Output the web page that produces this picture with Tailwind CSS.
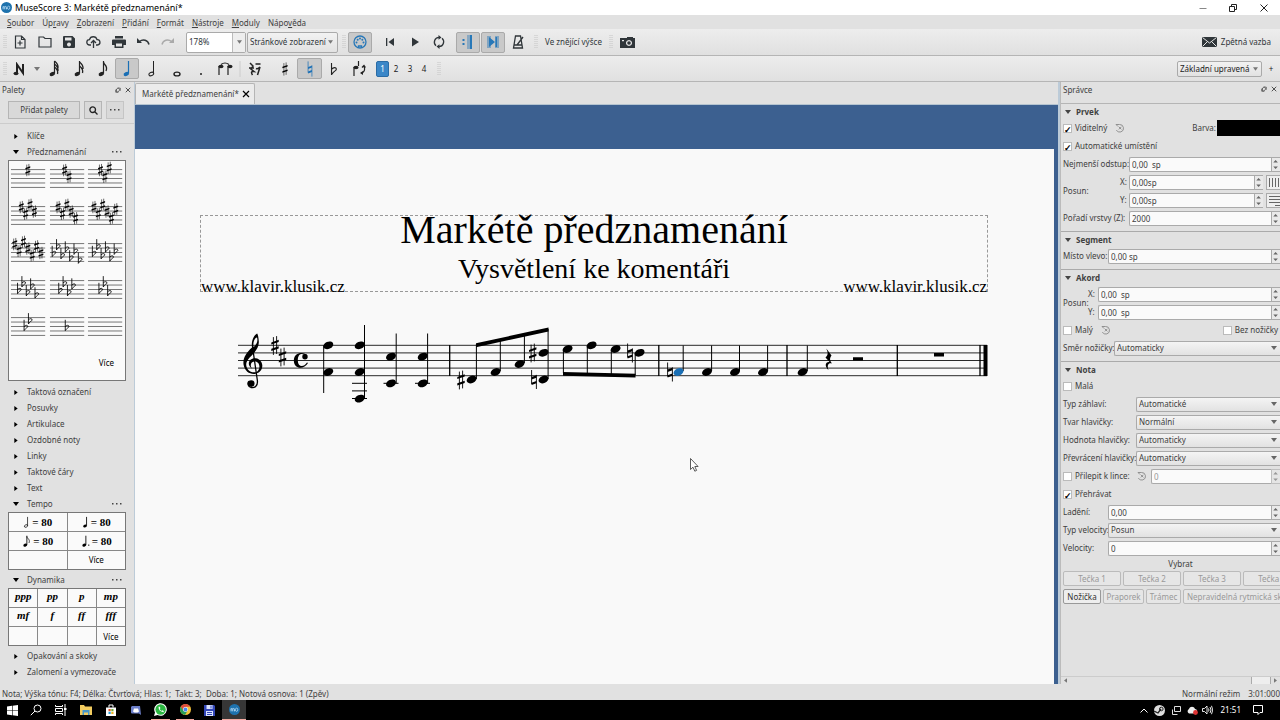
<!DOCTYPE html>
<html lang="cs">
<head>
<meta charset="utf-8">
<title>MuseScore 3: Markétě předznamenání*</title>
<script src="https://cdn.jsdelivr.net/npm/@tailwindcss/browser@4"></script>
</head>
<body class="font-['Noto_Sans','Open_Sans',sans-serif] text-[8px] leading-[12px] text-[#404040] bg-[#e1e1e1] overflow-hidden">

<svg class="hidden" aria-hidden="true">
  <symbol id="head" viewBox="-6 -5 12 10" overflow="visible"><ellipse rx="5.2" ry="3.6" transform="rotate(-24)"/></symbol>
  <symbol id="sharp" viewBox="-4 -10 8 20" overflow="visible"><path d="M-1.6-8.4V9.4M1.6-9.4V8.4" stroke="currentColor" stroke-width=".9" fill="none"/><path d="M-3.7-2.1 3.7-4.7V-2.5L-3.7.1ZM-3.7 4.3 3.7 1.7V3.9L-3.7 6.5Z" transform="translate(0 -1)"/></symbol>
  <symbol id="natural" viewBox="-4 -10 8 20" overflow="visible"><path d="M-2.4-9.5V4.6M2.4-4.6V9.5" stroke="currentColor" stroke-width=".9" fill="none"/><path d="M-2.4-2.4 2.4-4.2V-1.8L-2.4 0ZM-2.4 3.2 2.4 1.4V3.8L-2.4 5.6Z"/></symbol>
  <symbol id="flat" viewBox="-3 -10 6 14" overflow="visible"><path d="M-2.4-12V4.6C1-.8 3.2.2 3.2-1.6 3.2-4.4-.4-4-2.4-1.6" fill="none" stroke="currentColor" stroke-width="1.3"/></symbol>
  <symbol id="spin" viewBox="0 0 9 14" preserveAspectRatio="none"><path d="M0 0h9v14H0z" fill="#e9e9e9"/><path d="M.5 0v14M0 .5h9M0 13.500h9" stroke="#aaa" fill="none"/><path d="M2.3 5.2h4.6L4.6 2.7zM2.3 8.8h4.6L4.6 11.3z" fill="#666"/></symbol>
  <symbol id="down" viewBox="0 0 6 4"><path d="M0 0h6L3 4z"/></symbol>
  <symbol id="right" viewBox="0 0 4 6"><path d="M0 0v6l4-3z"/></symbol>
  <symbol id="x" viewBox="0 0 8 8"><path d="M1 1l6 6M7 1l-6 6" stroke="currentColor" stroke-width="1.2" fill="none"/></symbol>
  <symbol id="float" viewBox="0 0 8 8"><path d="M3.5 1.5H7V5M1 3.500V7h3.500M2 6.500C1 2.500 3 1.500 5 1.500M6 3c0 2-1 3.500-3 3.500" stroke="currentColor" fill="none"/></symbol>
  <symbol id="reset" viewBox="0 0 10 10"><path d="M1 1.500h3.500a3.800 3.800 0 1 1-3.200 5.500M1 1.500 3 3.500M3.800 3.800l2.600 2.600M6.400 3.800 3.800 6.400" stroke="#888" stroke-width=".9" fill="none"/></symbol>
  <symbol id="ms" viewBox="0 0 12 12"><circle cx="6" cy="6" r="6" fill="#1e72ad"/><path d="M2.300 8V4.800M2.300 5.800c.3-1.200 1.800-1.200 1.800.2V8M4.100 5.800c.4-1.200 1.900-1.200 1.900.2V8" stroke="#b9dcf5" fill="none"/><ellipse cx="8.300" cy="6.300" rx="1.300" ry="1.800" fill="none" stroke="#b9dcf5" stroke-width=".8"/></symbol>
  <symbol id="grip" viewBox="0 0 4 14"><path d="M1 0v14M3 0v14" stroke="#c4c4c4" stroke-dasharray="1 1" fill="none"/></symbol>
  <symbol id="qn" viewBox="0 0 10 18"><path d="M6.500 1v12.500" stroke="currentColor" stroke-width="1.200"/><ellipse cx="4.300" cy="14" rx="2.800" ry="2" transform="rotate(-24 4.300 14)"/></symbol>
</svg>

<div class="flex h-screen flex-col">
  <!-- Title bar -->
  <header class="flex h-[15px] shrink-0 items-center bg-white pl-[1px] text-black">
    <svg class="size-[11px]"><use href="#ms"/></svg>
    <h1 class="ml-[3px] flex-1 text-[9px]">MuseScore 3: Markétě předznamenání*</h1>
    <button aria-label="Minimalizovat" class="flex w-[30px] justify-center"><svg class="size-[8px]" viewBox="0 0 8 8"><path d="M0.500 4.500h7" stroke="#888"/></svg></button>
    <button aria-label="Obnovit" class="flex w-[30px] justify-center"><svg class="size-[8px]" viewBox="0 0 8 8" fill="none" stroke="#222"><path d="M.5 2.500h5v5h-5zM2.500 2.500v-2h5v5h-2"/></svg></button>
    <button aria-label="Zavřít" class="flex w-[32px] justify-center"><svg class="size-[8px]" viewBox="0 0 8 8" stroke="#222"><path d="M.5.5l7 7M7.500.5l-7 7"/></svg></button>
  </header>

  <nav class="flex h-[14px] shrink-0 items-center gap-[8px] pl-[7px] pt-[1px]">
    <button><u>S</u>oubor</button><button>Úp<u>r</u>avy</button><button><u>Z</u>obrazení</button><button><u>P</u>řidání</button><button><u>F</u>ormát</button><button><u>N</u>ástroje</button><button><u>M</u>oduly</button><button>Nápo<u>v</u>ěda</button>
  </nav>

  <!-- File and playback toolbar -->
  <div class="flex h-[27px] shrink-0 items-center border-b border-[#b5b5b5] bg-linear-to-b from-[#ededed] to-[#e0e0e0] pl-[3px] text-[#30363a]">
    <svg class="h-[14px] w-[4px]"><use href="#grip"/></svg>
    <button aria-label="Nový" class="flex w-[25px] justify-center"><svg class="size-[14px]" viewBox="0 0 14 14" fill="none" stroke="currentColor" stroke-width="1.200"><path d="M2.500 1h6l3.500 3.500V13h-9.500zM8.500 1v3.500H12M7 5.500v5M4.500 8h5"/></svg></button>
    <button aria-label="Otevřít" class="flex w-[25px] justify-center"><svg class="size-[14px]" viewBox="0 0 14 14" fill="none" stroke="currentColor" stroke-width="1.200"><path d="M1 2h4.500L7 3.500h6V12H1z"/></svg></button>
    <button aria-label="Uložit" class="flex w-[24px] justify-center"><svg class="size-[14px]" viewBox="0 0 14 14"><path fill="currentColor" fill-rule="evenodd" d="M2 1h8.500L13 3.500V12q0 1-1 1H2q-1 0-1-1V2q0-1 1-1zM3 2.500v3h6.500v-3zM7 7.500a2 2 0 1 0 .01 0z"/></svg></button>
    <button aria-label="Uložit online" class="flex w-[25px] justify-center"><svg class="h-[14px] w-[15px]" viewBox="0 0 15 14" fill="none" stroke="currentColor" stroke-width="1.300"><path d="M5 10H3.500a2.700 2.700 0 0 1 0-5.400C4.500.8 10 .8 11 4.600a2.700 2.700 0 0 1 .5 5.400H10M7.500 13V6M5 8l2.500-2.500L10 8"/></svg></button>
    <button aria-label="Tisk" class="flex w-[25px] justify-center"><svg class="size-[14px]" viewBox="0 0 14 14"><path fill="currentColor" fill-rule="evenodd" d="M3 1h8v2.500H3zM1 4.500h12q1 0 1 1V10h-2.500v3h-9v-3H0V5.500q0-1 1-1zM4 8.500v3h6v-3z"/></svg></button>
    <button aria-label="Zpět" class="flex w-[24px] justify-center"><svg class="size-[14px]" viewBox="0 0 14 14"><path d="M1 3v5h5z" fill="currentColor"/><path d="M3.500 6.500C7 3.500 12 5 13 9.500" fill="none" stroke="currentColor" stroke-width="1.500"/></svg></button>
    <button aria-label="Znovu" class="flex w-[25px] justify-center text-[#aaa]"><svg class="size-[14px]" viewBox="0 0 14 14"><path d="M13 3v5H8z" fill="currentColor"/><path d="M10.500 6.500C7 3.500 2 5 1 9.500" fill="none" stroke="currentColor" stroke-width="1.500"/></svg></button>
    <div class="ml-[6px] flex h-[21px] w-[60px] items-center rounded-[2px] border border-[#aaa] bg-white">
      <input aria-label="Lupa" value="178%" class="min-w-0 flex-1 pl-[2px]">
      <button aria-label="Lupa – nabídka" class="flex h-full w-[13px] items-center justify-center border-l border-[#bbb] bg-[#eee] text-[#777]"><svg class="h-[4px] w-[5px]" fill="currentColor"><use href="#down"/></svg></button>
    </div>
    <div class="relative ml-[1px] w-[91px]">
      <select aria-label="Zobrazení" class="h-[21px] w-full appearance-none rounded-[2px] border border-[#aaa] bg-linear-to-b from-[#f2f2f2] to-[#e2e2e2] pl-[2px]"><option>Stránkové zobrazení</option></select>
      <svg class="pointer-events-none absolute right-[5px] top-[8px] h-[4px] w-[5px]" fill="#777"><use href="#down"/></svg>
    </div>
    <svg class="ml-[4px] mr-[2px] h-[14px] w-[4px]"><use href="#grip"/></svg>
    <button aria-label="MIDI vstup" class="flex h-[21px] w-[24px] items-center justify-center rounded-[2px] border border-[#aaa] bg-[#c9c9c9]"><svg class="size-[14px]" viewBox="0 0 14 14" fill="none" stroke="#2878b8" stroke-width="1.300"><circle cx="7" cy="7" r="6"/><path d="M5.500 13v-2h3v2"/><g fill="#2878b8" stroke="none"><circle cx="3.500" cy="7.500" r="1"/><circle cx="4.700" cy="4.700" r="1"/><circle cx="7" cy="3.600" r="1"/><circle cx="9.300" cy="4.700" r="1"/><circle cx="10.500" cy="7.500" r="1"/></g></svg></button>
    <button aria-label="Na začátek" class="ml-[5px] flex w-[25px] justify-center"><svg class="h-[10px] w-[10px]" viewBox="0 0 10 10" fill="currentColor"><path d="M1 1h1.300v8H1zM9 1v8L3.500 5z"/></svg></button>
    <button aria-label="Přehrát" class="flex w-[25px] justify-center"><svg class="size-[10px]" viewBox="0 0 10 10" fill="currentColor"><path d="M2 .5v9L9 5z"/></svg></button>
    <button aria-label="Opakovat" class="flex w-[24px] justify-center"><svg class="size-[14px]" viewBox="0 0 14 14"><g fill="none" stroke="currentColor" stroke-width="1.300"><path d="M4 10.800A4.800 4.800 0 0 1 7 2.400M10 3.200A4.800 4.800 0 0 1 7 11.600"/></g><path d="M6.500 0v4.800L9.500 2.400zM7.500 9.200V14L4.500 11.600z" fill="currentColor"/></svg></button>
    <button aria-label="Přehrát opakování" class="ml-[5px] flex h-[21px] w-[24px] items-center justify-center rounded-[2px] border border-[#aaa] bg-[#c9c9c9]"><svg class="size-[14px]" viewBox="0 0 14 14" fill="#2878b8"><path d="M1.500 4h2v2h-2zM1.500 8h2v2h-2zM9 0h2v14H9z"/><path d="M6 0h3v14H6z" opacity=".4"/></svg></button>
    <button aria-label="Posouvat notový zápis" class="ml-[1px] flex h-[21px] w-[24px] items-center justify-center rounded-[2px] border border-[#aaa] bg-[#c9c9c9]"><svg class="size-[14px]" viewBox="0 0 14 14" fill="#2878b8"><path d="M3 2v10l6-5zM9.500 2H11v10H9.500z"/><path d="M1 1h4v12H1zM9 1h4v12H9z" opacity=".45"/></svg></button>
    <button aria-label="Metronom" class="flex w-[25px] justify-center"><svg class="size-[14px]" viewBox="0 0 14 14" fill="none" stroke="currentColor" stroke-width="1.300"><path d="M4.500 1h5l2 12h-9zM6 10l6-8M3.500 10h7"/></svg></button>
    <svg class="ml-[4px] h-[14px] w-[4px]"><use href="#grip"/></svg>
    <button class="ml-[7px] w-[56px] whitespace-nowrap">Ve znějící výšce</button>
    <svg class="ml-[8px] h-[14px] w-[4px]"><use href="#grip"/></svg>
    <button aria-label="Snímek" class="ml-[7px]"><svg class="h-[11px] w-[15px]" viewBox="0 0 15 11"><path fill="currentColor" fill-rule="evenodd" d="M1 1h6V0h6v1h2v10H0V1zM9 3a3 3 0 1 0 .01 0zM2 3v1.200h2V3z"/><circle cx="9" cy="6" r="1.800" fill="currentColor"/></svg></button>
    <button class="ml-auto mr-[9px] flex items-center gap-[4px]"><svg class="h-[10px] w-[15px]" viewBox="0 0 15 10"><path fill="#30363a" d="M0 0h15v10H0z"/><path d="M.5.5l7 5.500 7-5.500M.5 9.500l5-5M14.500 9.500l-5-5" stroke="#e5e5e5" fill="none"/></svg>Zpětná vazba</button>
  </div>

  <!-- Note input toolbar -->
  <div class="flex h-[26px] shrink-0 items-center border-b border-[#b5b5b5] bg-linear-to-b from-[#ededed] to-[#e0e0e0] pl-[3px] text-[#222]">
    <svg class="mr-[1px] h-[14px] w-[4px]"><use href="#grip"/></svg>
    <button aria-label="Zadávání not" class="flex w-[24px] justify-center"><svg class="size-[14px]" viewBox="0 0 14 14"><path d="M4 11V2.500L10 11V2" stroke="currentColor" stroke-width="2" fill="none"/><ellipse cx="3" cy="11.500" rx="2.500" ry="1.800" fill="currentColor"/></svg></button>
    <button aria-label="Režim zadávání" class="flex w-[10px] justify-center"><svg class="h-[4px] w-[6px]" fill="#777"><use href="#down"/></svg></button>
    <button aria-label="64-tinová" class="flex w-[24px] justify-center"><svg class="h-[18px] w-[12px]" viewBox="0 0 12 18" fill="currentColor"><use href="#qn" width="10" height="18"/><path d="M6.500 1q4 3 3.500 7M6.500 4q4 3 3.500 7M6.500 7q4 3 3 7" fill="none" stroke="currentColor" stroke-width="1.300"/></svg></button>
    <button aria-label="Šestnáctinová" class="flex w-[25px] justify-center"><svg class="h-[18px] w-[12px]" viewBox="0 0 12 18" fill="currentColor"><use href="#qn" width="10" height="18"/><path d="M6.500 2q4 3 3.500 7M6.500 6q4 3 3 7" fill="none" stroke="currentColor" stroke-width="1.300"/></svg></button>
    <button aria-label="Osminová" class="flex w-[24px] justify-center"><svg class="h-[18px] w-[12px]" viewBox="0 0 12 18" fill="currentColor"><use href="#qn" width="10" height="18"/><path d="M6.500 2c0 3 5 3.500 2.500 9" fill="none" stroke="currentColor" stroke-width="1.300"/></svg></button>
    <button aria-label="Čtvrťová" class="flex h-[21px] w-[24px] items-center justify-center rounded-[2px] border border-[#aaa] bg-[#c9c9c9] text-[#1a6fb5]"><svg class="h-[18px] w-[10px]" fill="currentColor"><use href="#qn"/></svg></button>
    <button aria-label="Půlová" class="flex w-[25px] justify-center"><svg class="h-[18px] w-[10px]" viewBox="0 0 10 18" fill="none" stroke="currentColor"><path d="M6.500 1v12.500"/><ellipse cx="4.300" cy="14" rx="2.500" ry="1.600" transform="rotate(-24 4.300 14)"/></svg></button>
    <button aria-label="Celá" class="flex w-[25px] justify-center"><svg class="h-[18px] w-[10px]" viewBox="0 0 10 18" fill="none" stroke="currentColor" stroke-width="1.400"><ellipse cx="5" cy="14" rx="3" ry="1.900"/></svg></button>
    <button aria-label="Tečka" class="flex w-[24px] justify-center"><svg class="h-[18px] w-[10px]" viewBox="0 0 10 18" fill="currentColor"><circle cx="5" cy="14" r="1"/></svg></button>
    <button aria-label="Ligatura" class="flex w-[24px] justify-center"><svg class="h-[14px] w-[16px]" viewBox="0 0 16 14" fill="currentColor"><path d="M2 4v9M11 4v9M4 2.500q4-3 8 0" fill="none" stroke="currentColor" stroke-width="1.200"/><ellipse cx="4" cy="4.500" rx="2.600" ry="1.800"/><ellipse cx="13" cy="4.500" rx="2.600" ry="1.800"/></svg></button>
    <svg class="ml-[2px] h-[16px] w-[2px]"><path d="M1 0v16" stroke="#ccc"/></svg>
    <button aria-label="Pomlka" class="ml-[1px] flex w-[25px] justify-center"><svg class="h-[14px] w-[12px]" viewBox="0 0 12 14" fill="none" stroke="currentColor" stroke-width="1.500"><path d="M1 1l3 3-2 3 3 2.500Q1 9 3.500 13M0 6h5M6.500 2h5M7 6.500q2 1 4-1.500L8.500 13"/></svg></button>
    <button aria-label="Křížek" class="ml-[5px] flex w-[25px] justify-center"><svg class="h-[14px] w-[8px]"><use href="#sharp"/></svg></button>
    <button aria-label="Odrážka" class="flex h-[21px] w-[25px] items-center justify-center rounded-[2px] border border-[#aaa] bg-[#c9c9c9] text-[#1a6fb5]"><svg class="h-[16px] w-[8px]" fill="currentColor"><use href="#natural"/></svg></button>
    <button aria-label="Béčko" class="flex w-[24px] justify-center"><svg class="h-[12px] w-[8px]" viewBox="-3 -9 7 14"><use href="#flat" x="-3" y="-10" width="6" height="14"/></svg></button>
    <button aria-label="Obrátit směr" class="flex w-[25px] justify-center"><svg class="h-[16px] w-[14px]" viewBox="0 0 14 16" fill="currentColor"><path d="M2 6v9M6.500 0v5M9 12q5-1 3-7M10 6.500l2-2 1.500 2" fill="none" stroke="currentColor" stroke-width="1.200"/><ellipse cx="4" cy="6.500" rx="2.600" ry="1.800"/><path d="M8 12l3-2v4z"/></svg></button>
    <button aria-label="Hlas 1" class="ml-[5px] h-[16px] w-[13px] rounded-[2px] border border-[#2b6ca5] bg-[#3b87c8] text-white">1</button>
    <button aria-label="Hlas 2" class="w-[14px]">2</button><button aria-label="Hlas 3" class="w-[14px]">3</button><button aria-label="Hlas 4" class="w-[14px]">4</button>
    <svg class="ml-[6px] h-[14px] w-[4px]"><use href="#grip"/></svg>
    <div class="relative ml-auto w-[85px]">
      <select aria-label="Pracovní prostor" class="h-[16px] w-full appearance-none rounded-[2px] border border-[#aaa] bg-linear-to-b from-[#f2f2f2] to-[#e2e2e2] pl-[2px]"><option>Základní upravená</option></select>
      <svg class="pointer-events-none absolute right-[4px] top-[6px] h-[4px] w-[5px]" fill="#777"><use href="#down"/></svg>
    </div>
    <button aria-label="Nový pracovní prostor" class="w-[18px]">+</button>
  </div>

  <main class="flex min-h-0 flex-1">
    <!-- Palettes -->
    <aside class="flex w-[134px] shrink-0 flex-col">
      <div class="flex h-[16px] items-center gap-[4px] pl-[2px] pr-[3px]"><h2 class="flex-1">Palety</h2><button aria-label="Odpojit"><svg class="size-[6px]"><use href="#float"/></svg></button><button aria-label="Zavřít palety"><svg class="size-[6px]"><use href="#x"/></svg></button></div>
      <div class="flex gap-[4px] pl-[8px] pt-[3px]">
        <button class="h-[18px] w-[72px] border border-[#b5b5b5] bg-[#d9d9d9]">Přidat palety</button>
        <button aria-label="Hledat" class="flex h-[18px] w-[18px] items-center justify-center border border-[#b5b5b5] bg-[#d9d9d9]"><svg class="size-[9px]" viewBox="0 0 9 9" fill="none" stroke="#222" stroke-width="1.300"><circle cx="3.700" cy="3.700" r="2.800"/><path d="M5.800 5.800 8.500 8.500"/></svg></button>
        <button aria-label="Více možností" class="flex h-[18px] w-[18px] items-center justify-center border border-[#c5c5c5] bg-[#d9d9d9]"><svg class="h-[2px] w-[10px]" viewBox="0 0 10 2"><path d="M0 0h1.500v1.500H0zM4 0h1.500v1.500H4zM8 0h1.500v1.500H8z" fill="#444"/></svg></button>
      </div>
      <div class="mt-[4px] border-t border-[#ccc] pt-[4px]">
        <div class="pal flex h-[16px] items-center pl-[13px] pr-[12px]" data-name="Klíče"></div>
        <div class="pal flex h-[16px] items-center pl-[13px] pr-[12px]" data-name="Předznamenání" data-open="1"></div>
        <div class="ml-[8px] flex h-[221px] w-[118px] flex-col border border-[#777] bg-[#fafafa]">
          <div id="keys" class="grid grid-cols-3 text-black"></div>
          <button class="mr-[11px] mt-[11px] self-end text-black">Více</button>
        </div>
        <div class="h-[3px]"></div>
        <div class="pal flex h-[16px] items-center pl-[13px] pr-[12px]" data-name="Taktová označení"></div>
        <div class="pal flex h-[16px] items-center pl-[13px] pr-[12px]" data-name="Posuvky"></div>
        <div class="pal flex h-[16px] items-center pl-[13px] pr-[12px]" data-name="Artikulace"></div>
        <div class="pal flex h-[16px] items-center pl-[13px] pr-[12px]" data-name="Ozdobné noty"></div>
        <div class="pal flex h-[16px] items-center pl-[13px] pr-[12px]" data-name="Linky"></div>
        <div class="pal flex h-[16px] items-center pl-[13px] pr-[12px]" data-name="Taktové čáry"></div>
        <div class="pal flex h-[16px] items-center pl-[13px] pr-[12px]" data-name="Text"></div>
        <div class="pal flex h-[16px] items-center pl-[13px] pr-[12px]" data-name="Tempo" data-open="1"></div>
        <div class="ml-[8px] grid w-[118px] grid-cols-2 gap-px border border-[#777] bg-[#888] text-black">
          <div class="flex h-[18px] items-center justify-center gap-[2px] bg-[#fafafa] font-['Liberation_Serif',serif] text-[11px] font-bold"><svg class="h-[13px] w-[7px]" viewBox="0 0 10 18" fill="none" stroke="currentColor"><path d="M6.500 1v12.500"/><ellipse cx="4.300" cy="14" rx="2.500" ry="1.600" transform="rotate(-24 4.300 14)"/></svg>= 80</div>
          <div class="flex h-[18px] items-center justify-center gap-[2px] bg-[#fafafa] font-['Liberation_Serif',serif] text-[11px] font-bold"><svg class="h-[13px] w-[7px]"><use href="#qn"/></svg>= 80</div>
          <div class="flex h-[18px] items-center justify-center gap-[2px] bg-[#fafafa] font-['Liberation_Serif',serif] text-[11px] font-bold"><svg class="h-[13px] w-[9px]" viewBox="0 0 12 18"><use href="#qn" width="10" height="18"/><path d="M6.500 2c0 3 5 3.500 3 9" fill="none" stroke="currentColor"/></svg>= 80</div>
          <div class="flex h-[18px] items-center justify-center gap-[2px] bg-[#fafafa] font-['Liberation_Serif',serif] text-[11px] font-bold"><svg class="h-[13px] w-[9px]" viewBox="0 0 12 18"><use href="#qn" width="10" height="18"/><circle cx="10.500" cy="14" r="1"/></svg>= 80</div>
          <div class="h-[18px] bg-[#fafafa]"></div>
          <button class="h-[18px] bg-[#fafafa]">Více</button>
        </div>
        <div class="h-[2px]"></div>
        <div class="pal flex h-[16px] items-center pl-[13px] pr-[12px]" data-name="Dynamika" data-open="1"></div>
        <div class="ml-[8px] grid w-[118px] grid-cols-4 gap-px border border-[#777] bg-[#888] text-center font-['Liberation_Serif',serif] text-[11px] font-bold italic leading-[15px] text-black">
          <div class="h-[18px] bg-[#fafafa]">ppp</div><div class="h-[18px] bg-[#fafafa]">pp</div><div class="h-[18px] bg-[#fafafa]">p</div><div class="h-[18px] bg-[#fafafa]">mp</div>
          <div class="h-[18px] bg-[#fafafa]">mf</div><div class="h-[18px] bg-[#fafafa]">f</div><div class="h-[18px] bg-[#fafafa]">ff</div><div class="h-[18px] bg-[#fafafa]">fff</div>
          <div class="h-[18px] bg-[#fafafa]"></div><div class="h-[18px] bg-[#fafafa]"></div><div class="h-[18px] bg-[#fafafa]"></div>
          <button class="h-[18px] bg-[#fafafa] font-['Noto_Sans','Open_Sans',sans-serif] text-[8px] font-normal not-italic">Více</button>
        </div>
        <div class="h-[2px]"></div>
        <div class="pal flex h-[16px] items-center pl-[13px] pr-[12px]" data-name="Opakování a skoky"></div>
        <div class="pal flex h-[16px] items-center pl-[13px] pr-[12px]" data-name="Zalomení a vymezovače"></div>
      </div>
    </aside>

    <!-- Score -->
    <section class="flex min-w-0 flex-1 flex-col border-l border-r-2 border-[#bccbd8]">
      <div class="flex h-[23px] shrink-0 items-end border-b border-[#b5c4d0]">
        <button class="flex h-[21px] w-[120px] items-center gap-[3px] whitespace-nowrap rounded-t-[2px] border border-b-0 border-[#b5b5b5] bg-[#ebebeb] pl-[6px]">Markétě předznamenání* <svg class="size-[8px] text-black"><use href="#x"/></svg></button>
      </div>
      <div class="flex flex-1 flex-col bg-[#3c6090] pr-[4px] pt-[44px]">
        <article class="flex-1 bg-[#f9f9f9] pl-[65px] pr-[66px] pt-[66px] font-['Liberation_Serif',serif] text-black">
          <div class="flex flex-col border border-dashed border-[#999] text-center">
            <h2 class="text-[40px] leading-[28px]">Markétě předznamenání</h2>
            <h3 class="mt-[11px] text-[28px] leading-[28px]">Vysvětlení ke komentáři</h3>
            <div class="flex justify-between text-[17px] leading-[8px]"><span>www.klavir.klusik.cz</span><span>www.klavir.klusik.cz</span></div>
          </div>
          <svg class="mt-[23px] block w-full overflow-visible" viewBox="200 315 788 160" role="img" aria-label="Notová osnova">
            <path d="M238 345.300H987M238 352.900H987M238 360.500H987M238 368.100H987M238 375.700H987" stroke="#111" stroke-width=".9"/>
            <path d="M449.700 345V376M658.800 345V376M787 345V376M897.300 345V376M980 345V376" stroke="#000" stroke-width="1.300"/>
            <path d="M983.500 345h4v31h-4z"/>
            <!-- treble clef -->
            <path d="M252.600 347.500L257.300 380C258.300 386.500 254 388.300 251 387.500 248 386.500 247 383.200 249 381.200" fill="none" stroke="#000" stroke-width="1.300"/>
            <path d="M257.200 333.500C254 335 251 341 252 347.500 246 353 242.800 358 243.500 364.500 245 372.500 251 375 257 373.500L256.800 372C250.500 373.500 246.300 369.500 246.200 364.500 246.200 357 259.500 352.500 258.800 341.500 258.600 337.500 258 335 257.200 333.500ZM257 337.500C258.400 342 256 345 253.500 347 252.800 342 254.500 338 257 337.500Z" fill-rule="evenodd"/>
            <path d="M252.500 369C245.500 364.500 249.500 357.500 255.800 358.300 263.500 359.500 264.800 369.500 257.500 373.200L256.500 372C261.500 368.500 259.500 361.500 255 361.500 250.500 361.500 249.500 366 252.500 369Z"/>
            <circle cx="251.200" cy="383.600" r="3.300"/>
            <use href="#sharp" x="271" y="335.500" width="8" height="20"/><use href="#sharp" x="278.500" y="347" width="8" height="20"/>
            <!-- common time -->
            <path d="M307.500 355.500C305 352 294 350.800 293.800 360.500 294 369.500 304 370 308 363L307 362.500C303.500 368 297.800 367 297.800 360.500 297.800 354.500 301 353 303.500 354.500Z"/><circle cx="305" cy="356.800" r="2.700"/>
            <path d="M323.700 345.500V393M364.500 325V398.500M396.200 333.500V383.500M427.600 333.500V383.500M476.400 344V379M500.300 339V371M524.400 334V363M548.100 329V379M563.400 350V373M587.300 346V374M611.300 350V374M635.200 353V375M683.200 345.500V371M711.600 345.500V371M739.500 345.500V371M767.600 345.500V371M807.300 345.500V371" stroke="#000"/>
            <path d="M352 383.300h15M352 390.900h15M352 398.500h15M383.500 383.300h15M415 383.300h15" stroke="#000"/>
            <path d="M476 343.200 548.500 327.600V331.500L476 347.200ZM563 372 635.500 373.700V377.600L563 375.800Z"/>
            <g id="notes"></g>
            <g fill="#1a6fb5"><use href="#head" x="672.500" y="367" width="12" height="10"/></g>
            <use href="#sharp" x="457" y="370" width="8" height="20"/><use href="#sharp" x="528.700" y="343" width="8" height="20"/>
            <use href="#natural" x="530" y="369.500" width="8" height="20"/><use href="#natural" x="626" y="343" width="8" height="20"/><use href="#natural" x="666" y="362" width="8" height="20"/>
            <path d="M826.300 348.500 831.500 355.500C829.500 358.500 829.500 360 832 363.500 829 362.300 826.500 364.500 828.500 370 824.500 366.500 825 361.500 829.500 362L825.500 357.500C828.500 354.500 828 352.500 826.300 348.500Z"/>
            <path d="M853 357.300h10v3.200h-10zM934 352.900h10v3.600h-10z"/>
            <path d="M690.500 458.500v11l2.500-2.300 1.800 4 1.800-.8-1.800-3.900h3.300z" fill="#fff" stroke="#333" stroke-width=".8"/>
          </svg>
        </article>
      </div>
    </section>

    <!-- Inspector -->
    <aside class="flex w-[220px] shrink-0 flex-col overflow-hidden border-l border-[#bbb]">
      <div class="flex h-[22px] shrink-0 items-start gap-[4px] border-b border-[#b5b5b5] pl-[2px] pr-[3px] pt-[2px]"><h2 class="flex-1">Správce</h2><button aria-label="Odpojit správce" class="mt-[2px]"><svg class="size-[6px]"><use href="#float"/></svg></button><button aria-label="Zavřít správce" class="mt-[2px]"><svg class="size-[6px]"><use href="#x"/></svg></button></div>

      <section class="border-b border-[#aaa] pb-[4px] pl-[2px]">
        <h3 class="flex h-[15px] items-center gap-[5px] pl-[2px] font-bold"><svg class="h-[4px] w-[6px]" fill="#444"><use href="#down"/></svg>Prvek</h3>
        <div class="flex h-[18px] items-center"><label class="flex items-center gap-[3px]"><input type="checkbox" checked class="tick">Viditelný</label><button aria-label="Obnovit viditelnost" class="ml-[8px]"><svg class="size-[10px]"><use href="#reset"/></svg></button><span class="ml-auto mr-[1px]">Barva:</span><button aria-label="Barva" class="h-[16px] w-[63px] bg-black"></button></div>
        <div class="flex h-[18px] items-center"><label class="flex items-center gap-[3px]"><input type="checkbox" checked class="tick">Automatické umístění</label></div>
        <div class="flex h-[18px] items-center"><label for="minD" class="w-[66px] whitespace-nowrap">Nejmenší odstup:</label><input id="minD" value="0,00  sp" class="fld"><svg class="h-[15px] w-[9px]"><use href="#spin"/></svg></div>
        <div class="flex items-center"><span class="w-[57px]">Posun:</span>
          <div class="flex-1">
            <div class="flex h-[18px] items-center"><label for="px" class="w-[16px] pl-[7px]">X:</label><input id="px" value="0,00sp" class="fld"><svg class="h-[15px] w-[9px]"><use href="#spin"/></svg><button aria-label="Vodorovná mřížka" class="ml-[3px] h-[15px] w-[14px] border border-r-0 border-[#aaa] bg-[#eee]"><svg class="h-[13px] w-[13px]" viewBox="0 0 13 13"><path d="M2.500 2v9M5.500 2v9M8.500 2v9M11.500 2v9" stroke="#666"/></svg></button></div>
            <div class="flex h-[18px] items-center"><label for="py" class="w-[16px] pl-[7px]">Y:</label><input id="py" value="0,00sp" class="fld"><svg class="h-[15px] w-[9px]"><use href="#spin"/></svg><button aria-label="Svislá mřížka" class="ml-[3px] h-[15px] w-[14px] border border-r-0 border-[#aaa] bg-[#eee]"><svg class="h-[13px] w-[13px]" viewBox="0 0 13 13"><path d="M2 2.500h11M2 5.500h11M2 8.500h11M8 11.500h5" stroke="#666"/></svg></button></div>
          </div>
        </div>
        <div class="flex h-[18px] items-center"><label for="pz" class="w-[66px] whitespace-nowrap">Pořadí vrstvy (Z):</label><input id="pz" value="2000" class="fld"><svg class="h-[15px] w-[9px]"><use href="#spin"/></svg></div>
      </section>

      <section class="border-b border-[#aaa] pb-[4px] pl-[2px]">
        <h3 class="flex h-[15px] items-center gap-[5px] pl-[2px] font-bold"><svg class="h-[4px] w-[6px]" fill="#444"><use href="#down"/></svg>Segment</h3>
        <div class="flex h-[18px] items-center"><label for="lead" class="w-[45px] whitespace-nowrap">Místo vlevo:</label><input id="lead" value="0,00 sp" class="fld"><svg class="h-[15px] w-[9px]"><use href="#spin"/></svg></div>
      </section>

      <section class="border-b border-[#aaa] pb-[4px] pl-[2px]">
        <h3 class="flex h-[15px] items-center gap-[5px] pl-[2px] font-bold"><svg class="h-[4px] w-[6px]" fill="#444"><use href="#down"/></svg>Akord</h3>
        <div class="flex items-center"><span class="w-[25px]">Posun:</span>
          <div class="flex-1">
            <div class="flex h-[18px] items-center"><label for="ax" class="w-[10px]">X:</label><input id="ax" value="0,00  sp" class="fld"><svg class="h-[15px] w-[9px]"><use href="#spin"/></svg></div>
            <div class="flex h-[18px] items-center"><label for="ay" class="w-[10px]">Y:</label><input id="ay" value="0,00  sp" class="fld"><svg class="h-[15px] w-[9px]"><use href="#spin"/></svg></div>
          </div>
        </div>
        <div class="flex h-[18px] items-center"><label class="flex items-center gap-[3px]"><input type="checkbox" class="tick">Malý</label><button aria-label="Obnovit velikost" class="ml-[8px]"><svg class="size-[10px]"><use href="#reset"/></svg></button><label class="ml-auto mr-[2px] flex items-center gap-[3px]"><input type="checkbox" class="tick">Bez nožičky</label></div>
        <div class="flex h-[18px] items-center"><label for="stem" class="w-[51px] whitespace-nowrap">Směr nožičky:</label><select id="stem" class="cmb"><option>Automaticky</option></select></div>
      </section>

      <section class="pl-[2px]">
        <h3 class="flex h-[15px] items-center gap-[5px] pl-[2px] font-bold"><svg class="h-[4px] w-[6px]" fill="#444"><use href="#down"/></svg>Nota</h3>
        <div class="flex h-[18px] items-center"><label class="flex items-center gap-[3px]"><input type="checkbox" class="tick">Malá</label></div>
        <div class="flex h-[18px] items-center"><label for="n1" class="w-[73px] whitespace-nowrap">Typ záhlaví:</label><select id="n1" class="cmb"><option>Automatické</option></select></div>
        <div class="flex h-[18px] items-center"><label for="n2" class="w-[73px] whitespace-nowrap">Tvar hlavičky:</label><select id="n2" class="cmb"><option>Normální</option></select></div>
        <div class="flex h-[18px] items-center"><label for="n3" class="w-[73px] whitespace-nowrap">Hodnota hlavičky:</label><select id="n3" class="cmb"><option>Automaticky</option></select></div>
        <div class="flex h-[18px] items-center"><label for="n4" class="w-[73px] whitespace-nowrap">Převrácení hlavičky:</label><select id="n4" class="cmb"><option>Automaticky</option></select></div>
        <div class="flex h-[18px] items-center"><label class="flex w-[74px] items-center gap-[3px] whitespace-nowrap"><input type="checkbox" class="tick">Přilepit k lince:</label><button aria-label="Obnovit linku"><svg class="size-[10px]"><use href="#reset"/></svg></button><span class="w-[4px]"></span><input aria-label="Linka" value="0" disabled class="fld text-[#999]"><svg class="h-[15px] w-[9px] opacity-60"><use href="#spin"/></svg></div>
        <div class="flex h-[18px] items-center"><label class="flex items-center gap-[3px]"><input type="checkbox" checked class="tick">Přehrávat</label></div>
        <div class="flex h-[18px] items-center"><label for="tun" class="w-[45px]">Ladění:</label><input id="tun" value="0,00" class="fld"><svg class="h-[15px] w-[9px]"><use href="#spin"/></svg></div>
        <div class="flex h-[18px] items-center"><label for="vt" class="w-[45px] whitespace-nowrap">Typ velocity:</label><select id="vt" class="cmb"><option>Posun</option></select></div>
        <div class="flex h-[18px] items-center"><label for="vel" class="w-[45px]">Velocity:</label><input id="vel" value="0" class="fld"><svg class="h-[15px] w-[9px]"><use href="#spin"/></svg></div>
        <div class="flex h-[14px] items-center justify-center pl-[18px]">Vybrat</div>
        <div class="flex gap-[2px] text-[#999]">
          <button disabled class="h-[15px] w-[58px] shrink-0 rounded-[2px] border border-[#bbb] bg-[#e6e6e6]">Tečka 1</button><button disabled class="h-[15px] w-[58px] shrink-0 rounded-[2px] border border-[#bbb] bg-[#e6e6e6]">Tečka 2</button><button disabled class="h-[15px] w-[58px] shrink-0 rounded-[2px] border border-[#bbb] bg-[#e6e6e6]">Tečka 3</button><button disabled class="h-[15px] w-[58px] shrink-0 rounded-[2px] border border-[#bbb] bg-[#e6e6e6]">Tečka 4</button>
        </div>
        <div class="mt-[3px] flex gap-[2px] whitespace-nowrap text-[#999]">
          <button class="h-[15px] w-[38px] shrink-0 rounded-[2px] border border-[#999] bg-[#eee] text-[#333]">Nožička</button><button disabled class="h-[15px] w-[41px] shrink-0 rounded-[2px] border border-[#bbb] bg-[#e6e6e6]">Praporek</button><button disabled class="h-[15px] w-[35px] shrink-0 rounded-[2px] border border-[#bbb] bg-[#e6e6e6]">Trámec</button><button disabled class="h-[15px] shrink-0 rounded-[2px] border border-[#bbb] bg-[#e6e6e6] px-[3px]">Nepravidelná rytmická skupina</button>
        </div>
      </section>
      <div class="mt-auto flex h-[8px] items-center justify-between border-t border-[#ccc] px-[3px] text-[#777]">
        <svg class="h-[5px] w-[3px]" viewBox="0 0 4 6" fill="currentColor"><path d="M4 0v6L0 3z"/></svg><span class="ml-auto mr-[3px] h-full w-[20px] border-x border-[#aaa] bg-[#eee]"></span><svg class="h-[5px] w-[3px]" fill="currentColor"><use href="#right"/></svg>
      </div>
    </aside>
  </main>

  <footer class="flex h-[16px] shrink-0 items-center whitespace-pre pl-[2px] pt-[3px]"><span class="flex-1">Nota; Výška tónu: F4; Délka: Čtvrťová; Hlas: 1;  Takt: 3;  Doba: 1; Notová osnova: 1 (Zpěv)</span><span class="mr-[8px]">Normální režim</span><span>3:01:000</span></footer>

  <!-- Windows taskbar -->
  <div class="flex h-[20px] shrink-0 items-center bg-black text-white">
    <button aria-label="Start" class="flex w-[24px] justify-center"><svg class="size-[11px]" viewBox="0 0 11 11" fill="#fff"><path d="M0 1.500 5 .8v4.400H0zM5.600.7 11 0v5.200H5.600zM0 5.800h5v4.400L0 9.500zM5.600 5.800H11V11l-5.400-.7z"/></svg></button>
    <button aria-label="Hledat" class="flex w-[24px] justify-center"><svg class="size-[12px]" viewBox="0 0 12 12" fill="none" stroke="#fff"><circle cx="7.500" cy="4.500" r="3.500"/><path d="M5 7 .8 11.200"/></svg></button>
    <button aria-label="Zobrazení úloh" class="flex w-[25px] justify-center"><svg class="size-[12px]" viewBox="0 0 12 12" fill="none" stroke="#fff"><path d="M.5 1v1.500h7V1M.5 4.500h7v3h-7zM.5 11V9.500h7V11M10 0v12"/><path d="M9 4h2.500v2H9z" fill="#fff" stroke="none"/></svg></button>
    <button aria-label="Průzkumník" class="flex w-[25px] justify-center"><svg class="h-[10px] w-[12px]" viewBox="0 0 12 10"><path d="M0 0h4l1 1.500h7V10H0z" fill="#f2cc60"/><path d="M2.500 5h7v5H8V7.500H4V10H2.500z" fill="#4596ca"/></svg></button>
    <button aria-label="Store" class="flex w-[25px] justify-center"><svg class="size-[12px]" viewBox="0 0 12 12"><path d="M1 3.500h10V12H1z" fill="#fff"/><path d="M4 3.500V1h4v2.500" stroke="#fff" fill="none"/><path d="M3.500 5H5.700v2.200H3.500z" fill="#e34f26"/><path d="M6.300 5h2.200v2.200H6.300z" fill="#6ab03a"/><path d="M3.500 7.800H5.700V10H3.500z" fill="#28a0da"/><path d="M6.300 7.800h2.200V10H6.300z" fill="#efb420"/></svg></button>
    <button aria-label="Discord" class="flex w-[25px] justify-center"><svg class="h-[9px] w-[10px]" viewBox="0 0 10 9"><path d="M1 0h8l1 9-2-1.500H1q-1 0-1-1V1z" fill="#6c7fc9"/><path d="M2 5.500 3 2.500h4l1 3-1.500 1h-3z" fill="#fff"/></svg></button>
    <button aria-label="WhatsApp" class="mx-[3px] flex h-[20px] w-[19px] items-center justify-center border-b border-[#f3aaa0]"><svg class="size-[13px]" viewBox="0 0 13 13"><path d="M0 13l1-3.500A6.300 6.300 0 1 1 3.500 12z" fill="#fff"/><circle cx="6.600" cy="6.500" r="5.200" fill="#2bb741"/><path d="M4.500 3.800q0 4.500 5 5.500l.3-1.300-1.600-.8-.8.700q-1.200-.6-1.700-1.800l.7-.8-.5-1.500z" fill="#fff"/></svg></button>
    <button aria-label="Chrome" class="mx-[3px] flex h-[20px] w-[18px] items-center justify-center border-b border-[#f3aaa0]"><svg class="size-[11px]" viewBox="0 0 12 12"><circle cx="6" cy="6" r="6" fill="#f3c13a"/><path d="M.8 3A6 6 0 0 1 11.200 3H6L4 8z" fill="#dd4b3e"/><path d="M.8 3A6 6 0 0 0 5.500 12L8 7.500H4z" fill="#2a9d57"/><circle cx="6" cy="6" r="2.700" fill="#fff"/><circle cx="6" cy="6" r="2.100" fill="#4687f0"/></svg></button>
    <button aria-label="Total Commander" class="flex w-[25px] justify-center"><svg class="size-[11px]" viewBox="0 0 11 11"><path d="M0 0h10l1 1v10H0z" fill="#3347b8"/><path d="M2.500 0h6v4h-6zM2 6h7v5H2z" fill="#dbe4ff"/><path d="M3 7.500h5M3 9.500h5M7 .5v3" stroke="#3347b8"/></svg></button>
    <button aria-label="MuseScore" class="flex h-[20px] w-[24px] items-center justify-center border-b border-[#f3aaa0] bg-[#363636]"><svg class="size-[11px]"><use href="#ms"/></svg></button>
    <div class="ml-auto flex items-center">
      <svg class="mr-[6px] h-[5px] w-[8px]" viewBox="0 0 8 5" fill="none" stroke="#fff"><path d="M.5 4.500 4 1l3.500 3.500"/></svg>
      <svg class="mr-[7px] size-[11px]" viewBox="0 0 11 11"><circle cx="5.500" cy="5.500" r="5.500" fill="#ddd"/><path d="M0 6l4 2L7 4" stroke="#222" stroke-width="1.300" fill="none"/><circle cx="7.300" cy="4" r="1.800" fill="none" stroke="#222"/></svg>
      <svg class="mr-[5px] h-[9px] w-[9px]" viewBox="0 0 9 9" fill="none" stroke="#ddd"><path d="M.5 3.500v5h5M2.500.5h6v5h-6z"/></svg>
      <svg class="mr-[4px] h-[9px] w-[12px]" viewBox="0 0 12 9"><path d="M3 7.500A2.500 2.500 0 0 1 3 3c1-3 5-3 6 0a2.300 2.300 0 0 1 .5 4.500z" fill="#eee"/><circle cx="9.500" cy="6.500" r="2.400" fill="#d33"/></svg>
      <svg class="mr-[8px] h-[10px] w-[11px]" viewBox="0 0 11 10" fill="none" stroke="#fff" stroke-width=".9"><path d="M.5 3.500h2l2.500-2.500v8L2.500 6.500h-2zM6.500 3.500q1 1.500 0 3M8 2q2 3 0 6M9.500.8q2.500 4.200 0 8.400"/></svg>
      <time class="mr-[12px]">21:51</time>
      <svg class="mr-[17px] size-[10px]" viewBox="0 0 10 10" fill="none" stroke="#fff"><path d="M.5.5h9v7H7L5 9.500V7.500H.5z"/></svg>
    </div>
  </div>
</div>

<script>
  // Palette headings: arrow, name and, for open ones, a menu button
  document.querySelectorAll('.pal').forEach(function (row) {
    var open = row.dataset.open;
    row.innerHTML = '<button class="flex flex-1 items-center gap-[8px] whitespace-nowrap" aria-expanded="' + !!open + '">' +
      (open ? '<svg class="h-[4px] w-[6px]"><use href="#down"/></svg>' : '<svg class="h-[5px] w-[6px]"><use href="#right"/></svg>') +
      row.dataset.name + '</button>' +
      (open ? '<button aria-label="Nabídka palety"><svg class="h-[2px] w-[10px]" viewBox="0 0 10 2"><path d="M0 0h1.500v1.500H0zM4 0h1.500v1.500H4zM8 0h1.500v1.500H8z" fill="#444"/></svg></button>' : '');
  });
  // Form controls share one look
  document.querySelectorAll('.fld').forEach(function (e) { e.className += ' h-[15px] min-w-0 flex-1 whitespace-pre rounded-l-[2px] border border-r-0 border-[#aaa] bg-[#fafafa] pl-[2px]'; });
  document.querySelectorAll('.cmb').forEach(function (e) {
    e.className += ' h-[15px] min-w-0 flex-1 appearance-none rounded-l-[2px] border border-r-0 border-[#aaa] bg-linear-to-b from-[#f4f4f4] to-[#e2e2e2] pl-[2px]';
    e.insertAdjacentHTML('afterend', '<svg class="pointer-events-none -ml-[9px] mr-[3px] h-[4px] w-[6px]" fill="#666"><use href="#down"/></svg>');
  });
  document.querySelectorAll('.tick').forEach(function (e) {
    e.className += " grid size-[9px] appearance-none place-items-center border border-[#bbb] bg-white text-[9px] leading-none text-black checked:after:content-['✓'] after:font-bold";
  });
  // Key signatures: positive counts are sharps, negative are flats
  var sharps = [0, 3, -1, 2, 5, 1, 4], flats = [4, 1, 5, 2, 6, 3, 7], out = '';
  [1, 2, 3, 4, 5, 6, 7, -7, -6, -5, -4, -3, -2, -1, 0].forEach(function (n) {
    var c = Math.abs(n), s = '<svg class="h-[37px] w-full" viewBox="0 0 39 37" fill="currentColor"><path d="M2 8.500h34.500M2 13h34.500M2 17.500h34.500M2 22h34.500M2 26.500h34.500" stroke="#555" stroke-width=".8"/>';
    for (var i = 0; i < c; i++) {
      var x = 19 + (i - (c - 1) / 2) * 4.4, y = 9 + (n > 0 ? sharps : flats)[i] * 2.25;
      s += '<g transform="translate(' + x + ' ' + y + ') scale(.66)">' + (n > 0 ? '<use href="#sharp" x="-4" y="-10" width="8" height="20"/>' : '<use href="#flat" x="-3" y="-9" width="6" height="14"/>') + '</g>';
    }
    out += s + '</svg>';
  });
  document.getElementById('keys').innerHTML = out;
  // Black note heads at [x, y]
  document.getElementById('notes').innerHTML = [[328.3,345.3],[328.3,372],[359.7,345.3],[359.7,372],[359.7,398.6],[391,356.6],[391,383.4],[422.7,356.6],[422.7,383.4],[471.6,379.5],[495.6,372],[519.6,364],[543.5,352.8],[543.5,379.5],[567.6,349],[591.6,345.3],[615.6,349],[639.6,352.8],[707,372],[735,372],[763,372],[802.6,372]].map(function (p) {
    return '<use href="#head" x="' + (p[0] - 6) + '" y="' + (p[1] - 5) + '" width="12" height="10"/>';
  }).join('');
</script>
</body>
</html>
